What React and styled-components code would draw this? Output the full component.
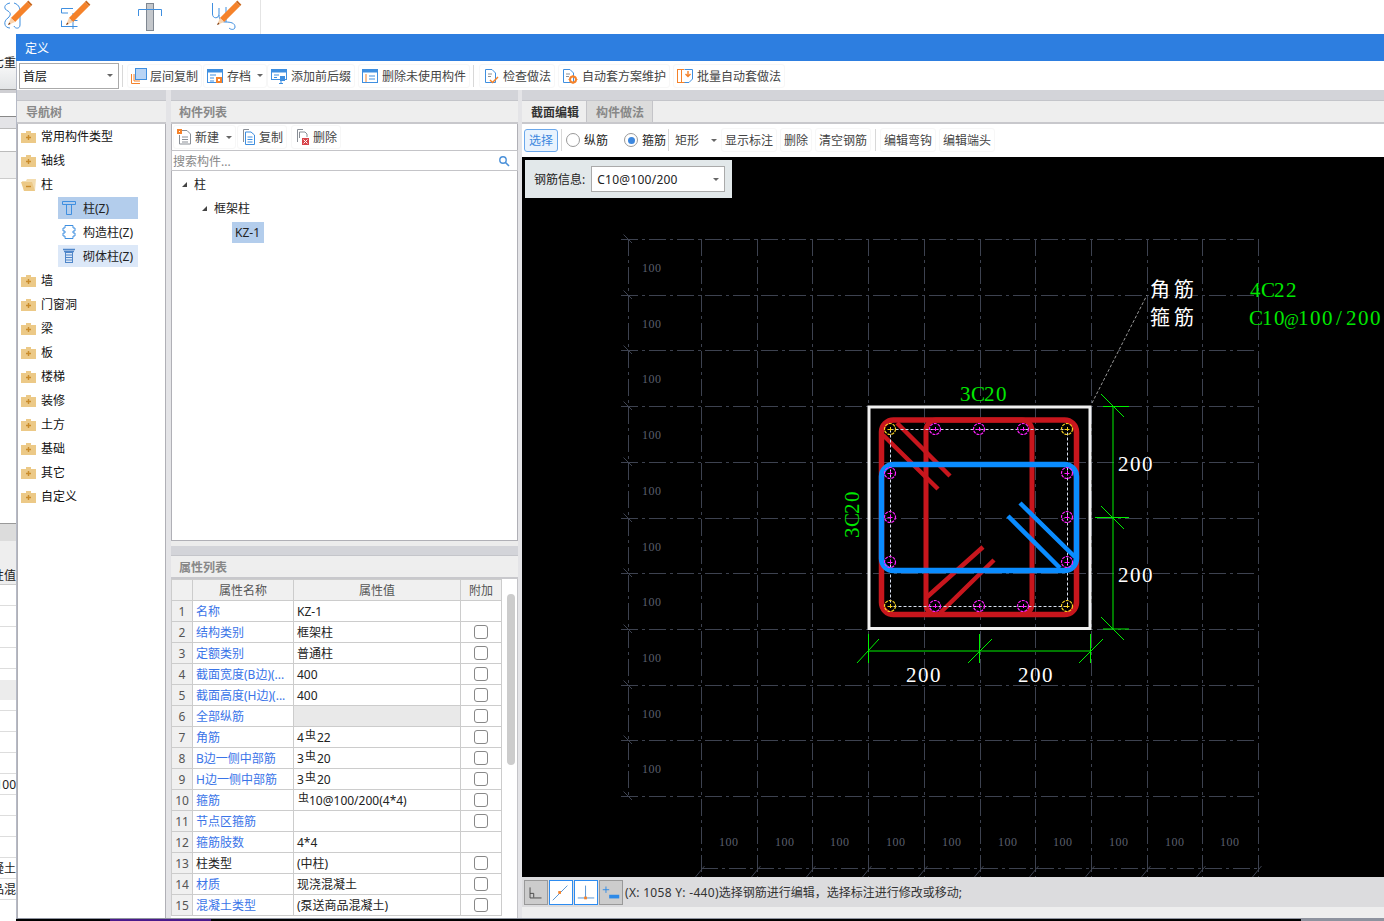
import styled, { createGlobalStyle } from 'styled-components';

const GlobalStyle = createGlobalStyle`
    html, body {
        margin: 0;
        padding: 0;
        background: #000;
        overflow: hidden;
    }
    * {
        box-sizing: border-box;
    }
`

const blue = '#3f8fe0';
const orange = '#f5822a';

const Svg = ({ size = 16, h, children }) => (
    <svg width={size} height={h || size} viewBox={`0 0 ${size} ${h || size}`} fill="none">{children}</svg>
);

const Pencil = ({ x = 0, y = 0 }) => (
    <g transform={`translate(${x} ${y})`}>
        <path d="M24.9 1.9 L29.1 6.1 L13.1 22.1 L8.9 17.9 Z" fill={orange} />
        <path d="M8.9 17.9 L13.1 22.1 L6 25 Z" fill="#f9d3ae" />
        <path d="M7.2 22.6 L8.6 24 L6 25 Z" fill="#7a3a12" />
        <path d="M24.9 1.9 L26.3 0.6 L30.4 4.7 L29.1 6.1 Z" fill="#c9661c" />
    </g>
);

const HookIcon = () => (
    <Svg size={32}>
        <path d="M8 3 C2 4 1 9 6 11 C9 13 9 15 6 18 C1 21 2 28 8 28" stroke={blue} />
        <path d="M12 3 C18 5 18 9 18 14 V25 C18 29 13 29 12 26" stroke={blue} />
        <Pencil />
    </Svg>
);

const StirrupIcon = () => (
    <Svg size={32}>
        <path d="M13 8.5 H1.5 V13 H8 M8 20.5 H17.5 M1 26.5 H17.5 M1.5 20.5 V26.5 H1 M13 13 V29" stroke={blue} />
        <Pencil />
    </Svg>
);

const ColumnIcon = () => (
    <Svg size={30}>
        <rect x="8.5" y="2.5" width="7" height="27" fill="#c4c7cb" stroke="#7f8791" />
        <path d="M0.5 15 V8.5 H23.5 V15" stroke={blue} />
    </Svg>
);

const TieIcon = () => (
    <Svg size={32}>
        <path d="M0.5 3 V14 C0.5 19 7 19 7 14 V8 M7 15 C7 19 9 22 13 22 C19 22 23 23 23 27 C23 30 19 30 17 28 M14 7 V22" stroke={blue} />
        <Pencil x={-1} />
    </Svg>
);

const LayerCopyIcon = () => (
    <Svg>
        <path d="M0.5 6 V15.5 H9 M3 6 V13 H9" stroke={orange} />
        <rect x="4.5" y="0.5" width="11" height="11" fill="#b8d4f5" stroke={blue} />
    </Svg>
);

const ArchiveIcon = () => (
    <Svg>
        <rect x="0.5" y="1.5" width="15" height="13" stroke={blue} />
        <rect x="0.5" y="1.5" width="15" height="3" fill={blue} />
        <path d="M3 7 H9 M3 10 H7 M3 13 H7" stroke={blue} />
        <rect x="9" y="9" width="6" height="6" fill={orange} />
        <rect x="11" y="11" width="2" height="2" fill="#fff" />
    </Svg>
);

const AffixIcon = () => (
    <Svg>
        <rect x="0.5" y="1.5" width="15" height="10" stroke={blue} />
        <rect x="0.5" y="1.5" width="15" height="3" fill={blue} />
        <path d="M3 7 H8 M3 9.5 H6" stroke={blue} />
        <rect x="9" y="8" width="5" height="5" fill={blue} />
        <path d="M8 15.5 H12 M10 13 V15.5" stroke={blue} />
    </Svg>
);

const PurgeIcon = () => (
    <Svg>
        <rect x="0.5" y="1.5" width="15" height="13" stroke={blue} />
        <rect x="0.5" y="1.5" width="15" height="3" fill={blue} />
        <path d="M3 7 H5 M3 9 H5 M3 11 H5 M3 13 H5" stroke={orange} />
        <path d="M7 8 H13 M7 11 H13" stroke={blue} />
    </Svg>
);

const CheckIcon = () => (
    <Svg>
        <path d="M2.5 1.5 H9 L12.5 5 V14.5 H2.5 Z" stroke={blue} />
        <path d="M5 6 H9 M5 8.5 H8" stroke="#8a8f96" />
        <path d="M7 12 L9.5 14.5 L15 9" stroke={orange} strokeWidth="1.5" />
    </Svg>
);

const SchemeIcon = () => (
    <Svg>
        <path d="M1.5 1.5 H8 L11.5 5 V14.5 H1.5 Z" stroke={blue} />
        <path d="M4 6 H8 M4 8.5 H7" stroke="#8a8f96" />
        <circle cx="11" cy="11.5" r="3" stroke={orange} strokeWidth="2" />
        <path d="M11 7 V8 M11 15 V16 M6.5 11.5 H7.5 M14.5 11.5 H15.5" stroke={orange} />
    </Svg>
);

const BatchIcon = () => (
    <Svg>
        <rect x="0.5" y="1.5" width="4" height="13" stroke={orange} />
        <path d="M7 1.5 H4.5 V14.5 H11" stroke={orange} />
        <path d="M7.5 1.5 H15.5 V11 L12 14.5 H7.5" stroke={blue} />
        <path d="M11 3 V8 M8.5 6 L11 8.5 L13.5 6" stroke={orange} strokeWidth="1.4" />
    </Svg>
);

const NewIcon = () => (
    <Svg>
        <path d="M4.5 1.5 H10 L13.5 5 V15 H2.5 V6" stroke="#8a8f96" />
        <path d="M5 8 H11 M5 10.5 H11 M5 13 H11" stroke="#8a8f96" />
        <rect x="0" y="0" width="5" height="5" fill={orange} />
        <rect x="2" y="2" width="1" height="1" fill="#fff" />
    </Svg>
);

const CopyIcon = () => (
    <Svg>
        <path d="M2.5 13 V0.5 H8" stroke="#8a8f96" />
        <path d="M4.5 3 H10 L13.5 6 V15.5 H4.5 Z" stroke={blue} />
        <path d="M6.5 8 H11.5 M6.5 10.5 H11.5 M6.5 13 H11.5" stroke={blue} />
    </Svg>
);

const DeleteIcon = () => (
    <Svg>
        <path d="M2.5 13 V0.5 H8" stroke="#8a8f96" />
        <path d="M4.5 9 V3 H10 L12 5 V8" stroke="#8a8f96" />
        <rect x="7" y="9" width="7" height="7" fill="#d9444a" />
        <path d="M8.5 10.5 L12.5 14.5 M12.5 10.5 L8.5 14.5" stroke="#fff" />
    </Svg>
);

const SearchIcon = () => (
    <Svg size={12}>
        <circle cx="5" cy="5" r="3.2" stroke="#4a90d9" strokeWidth="1.4" />
        <path d="M7.5 7.5 L11 11" stroke="#4a90d9" strokeWidth="1.6" />
    </Svg>
);

const ClosedFolder = () => (
    <Svg size={15} h={13}>
        <path d="M0 3 H5 V1 H10 V3 H15 V13 H0 Z" fill="#ecc987" />
        <path d="M5 7.5 H10 M7.5 5 V10" stroke="#c98b2a" strokeWidth="1.4" />
    </Svg>
);

const OpenFolder = () => (
    <Svg size={15} h={13}>
        <path d="M1 3 H5 L6 1 H15 L14 13 H3 Z" fill="#f3dcae" />
        <path d="M0 4 H11 L14 13 H3 Z" fill="#ecc987" />
        <path d="M5 8.5 H10" stroke="#c98b2a" strokeWidth="1.4" />
    </Svg>
);

const ColZIcon = () => (
    <Svg size={14} h={16}>
        <path d="M0.5 1.5 H13.5 V4.5 H0.5 Z M4.5 4.5 V14.5 H9.5 V4.5" stroke={blue} />
    </Svg>
);

const ConstructColIcon = () => (
    <Svg size={14} h={16}>
        <path d="M3 1.5 H11 V4 H13 V7 H11 V9 H13 V12 H11 V14.5 H3 V12 H1 V9 H3 V7 H1 V4 H3 Z" stroke={blue} strokeLinejoin="round" />
    </Svg>
);

const MasonryColIcon = () => (
    <Svg size={14} h={16}>
        <path d="M1 1.5 H13 M2 3.5 H12" stroke="#4f86c9" strokeWidth="1.4" />
        <rect x="3.5" y="4.5" width="7" height="10" stroke="#4f86c9" />
        <path d="M4 7 H10 M4 9.5 H10 M4 12 H10" stroke="#4f86c9" />
    </Svg>
);

const CornerIcon = () => (
    <Svg size={24} h={24}>
        <path d="M5.5 7 V18.5 H18" stroke="#444" />
        <path d="M5.5 13.5 H9.5 V18" stroke="#444" />
    </Svg>
);

const SlashIcon = () => (
    <Svg size={24} h={24}>
        <path d="M3 21 L19 5" stroke="#4f8fd0" />
        <rect x="9" y="11" width="3" height="3" fill={orange} />
    </Svg>
);

const PerpIcon = () => (
    <Svg size={24} h={24}>
        <path d="M3 18.5 H21 M11.5 5 V18.5" stroke="#4f8fd0" />
        <rect x="10" y="17" width="3" height="3" fill={orange} />
    </Svg>
);

const MarkIcon = () => (
    <Svg size={24} h={24}>
        <path d="M3 9.5 H10 M6.5 6 V13" stroke="#2d8ae8" />
        <rect x="10" y="15" width="11" height="4" fill="#2d8ae8" />
    </Svg>
);

const Page = styled.div`
    display: flex;
    flex-direction: column;
    width: 1384px;
    height: 921px;
    overflow: hidden;
    font-family: "Noto Sans", "Noto Sans CJK SC", sans-serif;
    font-size: 12px;
    color: #333;
`
const RibbonBar = styled.div`
    display: grid;
    grid-template-columns: 58px 78px 74px 49px 1fr;
    flex: 0 0 34px;
    padding-left: 2px;
    background: #fff;
    overflow: hidden;
`
const RibbonIcon = styled.div`
    padding-top: ${props => props.$top || 0}px;
    border-right: ${props => props.$last ? '1px solid #e4e4e4' : 'none'};
`
const Body = styled.div`
    display: flex;
    flex: 1;
    min-height: 0;
`
const Sliver = styled.div`
    display: flex;
    flex-direction: column;
    flex: 0 0 16px;
    background: #fff;
    overflow: hidden;
`
const SliverRow = styled.div`
    display: flex;
    align-items: ${props => props.$align || 'center'};
    justify-content: flex-end;
    flex: 0 0 ${props => props.$h}px;
    background: ${props => props.$bg || '#fff'};
    border-bottom: ${props => props.$line ? `1px solid ${props.$line}` : 'none'};
    color: #222;
    white-space: nowrap;
    font-size: 12px;
`
const WindowColumn = styled.div`
    display: flex;
    flex-direction: column;
    flex: 1;
    min-width: 0;
`
const Window = styled.div`
    display: flex;
    flex-direction: column;
    flex: 1;
    min-height: 0;
    border-left: 1px solid #b6bac6;
    border-bottom: 1px solid #8e939f;
    background: #e4e4e7;
`
const TaskEdge = styled.div`
    display: flex;
    flex: 0 0 2px;
    background: #000;
`
const TaskPiece = styled.div`
    flex: 0 0 ${props => props.$w}px;
    background: ${props => props.$bg};
`
const TitleBar = styled.div`
    display: flex;
    align-items: center;
    flex: 0 0 27px;
    margin-left: -1px;
    padding-left: 9px;
    background: #2d7ee0;
    color: #fff;
`
const MainToolbar = styled.div`
    display: flex;
    align-items: center;
    flex: 0 0 29px;
    padding-left: 2px;
    background: #fff;
`
const FloorSelect = styled.div`
    display: flex;
    align-items: center;
    justify-content: space-between;
    width: 100px;
    height: 26px;
    padding: 0 5px 0 3px;
    border: 1px solid #aaa;
    color: #111;
`
const Arrow = styled.span`
    flex: none;
    width: 0;
    height: 0;
    margin-left: ${props => props.$ml || 0}px;
    border-left: 3px solid transparent;
    border-right: 3px solid transparent;
    border-top: 3px solid #666;
`
const Sep = styled.div`
    flex: none;
    width: 1px;
    height: 22px;
    margin: 0 ${props => props.$mr ?? 4}px 0 ${props => props.$ml ?? 3}px;
    background: #d8d8d8;
`
const ToolButton = styled.div`
    display: flex;
    align-items: center;
    gap: ${props => props.$gap ?? 4}px;
    height: 24px;
    margin-right: ${props => props.$mr ?? 1}px;
    padding: 0 3px;
    border: 1px solid #f7f7f7;
    border-radius: 3px;
    color: #444;
    white-space: nowrap;
`
const Workspace = styled.div`
    display: flex;
    flex: 1;
    min-height: 0;
`
const Column = styled.div`
    display: flex;
    flex-direction: column;
    flex: 0 0 ${props => props.$w ? `${props.$w}px` : 'auto'};
    flex-grow: ${props => props.$w ? 0 : 1};
    min-width: 0;
    margin-left: ${props => props.$ml || 0}px;
    background: #fff;
`
const Strip = styled.div`
    flex: 0 0 ${props => props.$h || 11}px;
    background: #d3d4d9;
    border-top: ${props => props.$top ? `${props.$top}px solid #ececec` : 'none'};
    border-bottom: 1px solid #c4c5ca;
`
const PanelHeader = styled.div`
    display: flex;
    align-items: center;
    flex: 0 0 ${props => props.$h || 23}px;
    padding-left: ${props => props.$pl || 9}px;
    background: #eee;
    border-bottom: 2px solid #c8c8cc;
    color: #888;
    font-weight: 700;
`
const NavList = styled.div`
    display: flex;
    flex-direction: column;
    flex: 1;
    border-left: 1px solid #b0b0b6;
    border-right: 1px solid #b0b0b6;
`
const NavRow = styled.div`
    display: flex;
    align-items: center;
    gap: 5px;
    flex: 0 0 24px;
    padding-left: 3px;
    color: #111;
`
const NavChild = styled.div`
    display: flex;
    align-items: center;
    gap: 7px;
    flex: 0 0 22px;
    width: 80px;
    margin: 1px 0 1px 40px;
    padding-left: 4px;
    background: ${props => props.$tone === 'on' ? '#b3cdec' : props.$tone === 'soft' ? '#dce8f8' : 'transparent'};
    color: #222;
`
const CompToolbar = styled.div`
    display: flex;
    align-items: center;
    flex: 0 0 26px;
    padding-left: 1px;
    border-left: 1px solid #b0b0b6;
    border-right: 1px solid #b0b0b6;
`
const SearchBox = styled.div`
    display: flex;
    align-items: center;
    justify-content: space-between;
    flex: 0 0 21px;
    padding: 0 7px 0 1px;
    border: 1px solid #c4c4c8;
    color: #888;
`
const TreeArea = styled.div`
    flex: 1;
    padding-top: 1px;
    border-left: 1px solid #b0b0b6;
    border-right: 1px solid #b0b0b6;
    border-bottom: 1px solid #b0b0b6;
`
const TreeRow = styled.div`
    display: flex;
    align-items: center;
    gap: 7px;
    height: 24px;
    padding-left: ${props => props.$indent}px;
    color: #222;
`
const TreeCaret = styled.span`
    width: 0;
    height: 0;
    border-bottom: 5px solid #444;
    border-left: 5px solid transparent;
`
const TreeSelected = styled.span`
    display: flex;
    align-items: center;
    height: 21px;
    padding: 0 4px 0 3px;
    background: #b3cdec;
`
const PropsWrap = styled.div`
    display: flex;
    flex: 0 0 339px;
    overflow: hidden;
    border-right: 1px solid #c4c4c8;
`
const PropTable = styled.table`
    flex: none;
    width: 330px;
    height: fit-content;
    border-collapse: collapse;
    table-layout: fixed;
`
const Th = styled.th`
    height: 21px;
    padding: 0;
    background: #f0f0f0;
    border: 1px solid #ccc;
    color: #555;
    font-weight: 400;
    font-size: 12px;
`
const NumCell = styled.td`
    height: 21px;
    padding: 0;
    background: #f0f0f0;
    border: 1px solid #ccc;
    color: #555;
    text-align: center;
`
const NameCell = styled.td`
    padding: 0 3px;
    border: 1px solid #ccc;
    color: ${props => props.$plain ? '#222' : '#3a74e8'};
    white-space: nowrap;
    overflow: hidden;
`
const ValueCell = styled.td`
    padding: 0 3px;
    background: ${props => props.$grey ? '#e9e9e9' : '#fff'};
    border: 1px solid #ccc;
    color: #222;
    white-space: nowrap;
`
const CheckCell = styled.td`
    padding: 0;
    border: 1px solid #ccc;
`
const CheckBox = styled.span`
    display: block;
    width: 14px;
    height: 14px;
    margin: 0 auto;
    border: 1px solid #888;
    border-radius: 3px;
`
const RebarSign = styled.span`
    margin: 0 ${props => props.$mr ?? 1}px 0 1px;
    font-size: 11px;
    line-height: 0;
    vertical-align: 3px;
`
const ScrollTrack = styled.div`
    flex: 1;
    padding: 15px 0 0 5px;
`
const ScrollThumb = styled.div`
    width: 8px;
    height: 171px;
    background: #ccc;
    border-radius: 4px;
`
const TabRow = styled.div`
    display: flex;
    flex: 0 0 23px;
    background: #eee;
    border-bottom: 2px solid #c8c8cc;
`
const Tab = styled.div`
    display: flex;
    align-items: center;
    padding: 0 ${props => props.$active ? 7 : 8}px 0 9px;
    background: ${props => props.$active ? '#eee' : '#dcdcdc'};
    border-right: 1px solid #c4c4c8;
    color: ${props => props.$active ? '#333' : '#888'};
    font-weight: 700;
`
const EditToolbar = styled.div`
    display: flex;
    align-items: center;
    flex: 0 0 33px;
    padding: 0 0 1px 2px;
    background: #fff;
`
const SelectButton = styled.div`
    display: flex;
    align-items: center;
    justify-content: center;
    flex: none;
    width: 34px;
    height: 23px;
    background: #e9f3fd;
    border: 1px solid #6aa8ec;
    border-radius: 3px;
    color: #3c87de;
`
const RadioLabel = styled.label`
    display: flex;
    align-items: center;
    gap: 4px;
    flex: none;
    margin-right: ${props => props.$mr}px;
    color: #222;
`
const RadioDot = styled.span`
    display: flex;
    align-items: center;
    justify-content: center;
    width: 14px;
    height: 14px;
    background: #fff;
    border: 1px solid #999;
    border-radius: 50%;
    &::after {
        content: '';
        width: 7px;
        height: 7px;
        border-radius: 50%;
        background: ${props => props.$on ? '#3c87de' : 'transparent'};
    }
`
const ShapeSelect = styled.div`
    display: flex;
    align-items: center;
    flex: none;
    width: 47px;
    height: 22px;
    margin-right: 2px;
    padding-left: 3px;
    color: #444;
    white-space: nowrap;
`
const Canvas = styled.div`
    position: relative;
    flex: 0 0 720px;
    background: #000;
    overflow: hidden;
`
const InfoPanel = styled.div`
    position: absolute;
    left: 3px;
    top: 3px;
    display: flex;
    align-items: center;
    gap: 6px;
    width: 207px;
    height: 38px;
    padding-left: 9px;
    background: #e2e8ea;
    color: #222;
`
const InfoSelect = styled.div`
    display: flex;
    align-items: center;
    justify-content: space-between;
    width: 134px;
    height: 26px;
    padding: 0 5px;
    background: #fff;
    border: 1px solid #aaa;
    letter-spacing: 0.25px;
`
const StatusBar = styled.div`
    display: flex;
    align-items: center;
    gap: 1px;
    flex: 0 0 30px;
    padding-left: 2px;
    background: #dcdcde;
    color: #333;
`
const SnapButton = styled.div`
    display: flex;
    align-items: center;
    justify-content: center;
    flex: none;
    width: 24px;
    height: 25px;
    background: ${props => props.$on ? '#fff' : '#ccc'};
    border: ${props => props.$on ? '1px solid #2d8cf0' : '1px solid #999'};
`
const StatusText = styled.span`
    margin-left: 1px;
    white-space: nowrap;
`
const Coords = styled.span`
    letter-spacing: 0.3px;
`
const StatusFoot = styled.div`
    flex: 1;
    background: #eee;
`
const CadText = styled.text`
    font-family: "Liberation Serif", serif;
    font-size: ${props => props.$size || 21}px;
    fill: ${props => props.$fill || '#00e800'};
`
const CjkText = styled.text`
    font-family: "Noto Sans CJK SC", sans-serif;
    font-size: 20px;
    letter-spacing: 4px;
    fill: #fff;
`

const sliverRows = [
    { h: 56, text: '七重', bg: 'linear-gradient(#fff 40%, #e2e4e6)', line: '#9a9a9a' },
    { h: 3, bg: '#cfcfd3' },
    { h: 24, line: '#888' },
    { h: 12, bg: '#e4e4e7', line: '#bbb' },
    { h: 23, line: '#bbb' },
    { h: 27, bg: '#f0f0f0', line: '#ccc' },
    { h: 345, line: '#999' },
    { h: 17, bg: '#dcdcdc' },
    { h: 44, bg: '#eee', text: '性值', line: '#ccc', align: 'flex-end' },
    { h: 21, line: '#ddd' },
    { h: 21, line: '#ddd' },
    { h: 21, line: '#ddd' },
    { h: 21, line: '#ddd' },
    { h: 11 },
    { h: 20, bg: '#ececec' },
    { h: 11, line: '#ddd' },
    { h: 21, line: '#ddd' },
    { h: 21, line: '#ddd' },
    { h: 21, line: '#ddd' },
    { h: 21, line: '#ddd', text: '100' },
    { h: 21, line: '#ddd' },
    { h: 21, line: '#ddd' },
    { h: 21, line: '#ddd' },
    { h: 21, line: '#ddd', text: '疑土' },
    { h: 21, line: '#ddd', text: '品混' },
    { h: 21 },
];

const mainTools = [
    { icon: <LayerCopyIcon />, label: '层间复制', gap: 3, mr: 1 },
    { icon: <ArchiveIcon />, label: '存档', arrow: true, gap: 4, mr: 0 },
    { icon: <AffixIcon />, label: '添加前后缀', gap: 4, mr: 3 },
    { icon: <PurgeIcon />, label: '删除未使用构件', gap: 4, mr: 0 },
];

const checkTools = [
    { icon: <CheckIcon />, label: '检查做法', gap: 4, mr: 3 },
    { icon: <SchemeIcon />, label: '自动套方案维护', gap: 4, mr: 3 },
    { icon: <BatchIcon />, label: '批量自动套做法', gap: 4, mr: 0 },
];

const navTop = ['常用构件类型', '轴线'];
const navBottom = ['墙', '门窗洞', '梁', '板', '楼梯', '装修', '土方', '基础', '其它', '自定义'];

const columnKinds = [
    { icon: <ColZIcon />, label: '柱(Z)', tone: 'on' },
    { icon: <ConstructColIcon />, label: '构造柱(Z)' },
    { icon: <MasonryColIcon />, label: '砌体柱(Z)', tone: 'soft' },
];

const props15 = [
    { name: '名称', value: 'KZ-1', noCheck: true },
    { name: '结构类别', value: '框架柱' },
    { name: '定额类别', value: '普通柱' },
    { name: '截面宽度(B边)(...', value: '400' },
    { name: '截面高度(H边)(...', value: '400' },
    { name: '全部纵筋', value: '', grey: true },
    { name: '角筋', value: <>4<RebarSign>虫</RebarSign>22</> },
    { name: 'B边一侧中部筋', value: <>3<RebarSign>虫</RebarSign>20</> },
    { name: 'H边一侧中部筋', value: <>3<RebarSign>虫</RebarSign>20</> },
    { name: '箍筋', value: <><RebarSign $mr={0}>虫</RebarSign>10@100/200(4*4)</> },
    { name: '节点区箍筋', value: '' },
    { name: '箍筋肢数', value: '4*4', noCheck: true },
    { name: '柱类型', value: '(中柱)', plain: true },
    { name: '材质', value: '现浇混凝土' },
    { name: '混凝土类型', value: '(泵送商品混凝土)' },
];

const GRID = '#3d4250';
const GREEN = '#00f000';
const DASH = '17 4 3 4';
const gridY = Array.from({ length: 11 }, (_, i) => Math.round(239 + i * 55.7) + 0.5);
const gridX = Array.from({ length: 11 }, (_, i) => Math.round(701 + i * 55.7) + 0.5);
const midBars = [[935, 429], [979, 429], [1023, 429], [890, 473], [1067, 473], [890, 517], [1067, 517], [890, 562], [1067, 562], [935, 606], [979, 606], [1023, 606]];
const cornerBars = [[890, 429], [1067, 429], [890, 606], [1067, 606]];

const Bar = ({ x, y, color, r = 5.5 }) => (
    <g>
        <circle cx={x} cy={y} r={r} stroke={color} strokeWidth="1.2" strokeDasharray="3 1" />
        <path d={`M${x - 2.5} ${y + 0.5} H${x + 2.5}`} stroke={color} />
        <path d={`M${x + 0.5} ${y - 2} V${y + 2}`} stroke={color} />
    </g>
);

// CAD text sits on a fixed 12px cell per character
const cellOffset = { C: 0, '@': -1, '/': 3 };
const MonoText = ({ x, y, fill, transform, children }) => (
    <CadText y={y} $fill={fill} transform={transform}>
        {[...children].map((ch, i) => (
            <tspan key={i} x={x + i * 12 + (cellOffset[ch] ?? 1)} fontSize={ch === '@' ? 16 : undefined}>{ch}</tspan>
        ))}
    </CadText>
);

const Section = () => (
    <svg width="862" height="720" viewBox="522 157 862 720" fill="none">
        {gridY.map(y => <path key={y} d={`M621 ${y} H1258`} stroke={GRID} strokeDasharray={DASH} />)}
        {gridY.map(y => <path key={y} d={`M623.5 ${y - 5} L632 ${y + 3.5}`} stroke={GRID} />)}
        <path d="M701 868.5 H1258" stroke={GRID} strokeDasharray={DASH} />
        <path d="M628.5 239 V796" stroke={GRID} strokeDasharray={DASH} />
        {gridX.map(x => <path key={x} d={`M${x} 239 V877`} stroke={GRID} strokeDasharray={DASH} />)}
        {gridX.map(x => <path key={x} d={`M${x - 6} 877 L${x + 3} 866`} stroke={GRID} />)}
        {gridY.slice(0, 10).map(y => <CadText key={y} x="642" y={y + 32} $size={12} $fill="#5a5f6c" textLength="19">100</CadText>)}
        {gridX.slice(0, 10).map(x => <CadText key={x} x={x + 17.5} y="846" $size={12} $fill="#5a5f6c" textLength="19">100</CadText>)}

        <rect x="869" y="407" width="221" height="221.5" stroke="#f0f0f0" strokeWidth="3" />
        <rect x="881.5" y="420" width="195" height="194.5" rx="12" stroke="#c8161d" strokeWidth="5.5" />
        <rect x="926" y="420" width="106" height="194.5" rx="10" stroke="#c8161d" strokeWidth="5" />
        <path d="M897 423 L950 476 M883 435 L938 489 M927 597 L983 547 M940 613 L994 560" stroke="#c8161d" strokeWidth="4.5" />
        <rect x="890.5" y="429.5" width="177" height="177" stroke="#d8e0f0" strokeDasharray="3 2" />
        <rect x="881.5" y="464.5" width="195" height="106" rx="12" stroke="#0a8cff" strokeWidth="5.5" />
        <path d="M1020 503 L1075 557 M1008 516 L1060 568" stroke="#0a8cff" strokeWidth="4.5" />
        {midBars.map(([x, y]) => <Bar key={`${x}-${y}`} x={x} y={y} color="#ff20ff" />)}
        {cornerBars.map(([x, y]) => <Bar key={`${x}-${y}`} x={x} y={y} color="#f5d020" />)}

        <path d="M1113 407 V629 M1103 406.5 H1129 M1095 517.5 H1129 M1103 629 H1129" stroke={GREEN} />
        <path d="M1101 394 L1124 417 M1101 506 L1124 529 M1101 617 L1124 640" stroke={GREEN} />
        <path d="M868 651 H1091 M868.5 634 V663 M979.5 634 V663 M1090.5 634 V663" stroke={GREEN} />
        <path d="M857 663 L879 639 M968 663 L992 639 M1079 663 L1103 639" stroke={GREEN} />
        <path d="M1092 403 L1147 295" stroke="#9a9a9a" strokeDasharray="3 2" />

        <MonoText x={959} y={401}>3C20</MonoText>
        <MonoText x={835} y={515} transform="rotate(-90 859 515)">3C20</MonoText>
        <MonoText x={905} y={682} fill="#fff">200</MonoText>
        <MonoText x={1017} y={682} fill="#fff">200</MonoText>
        <MonoText x={1117} y={471} fill="#fff">200</MonoText>
        <MonoText x={1117} y={582} fill="#fff">200</MonoText>
        <CjkText x="1150" y="297">角筋</CjkText>
        <CjkText x="1150" y="325">箍筋</CjkText>
        <MonoText x={1249} y={297}>4C22</MonoText>
        <MonoText x={1249} y={325}>C10@100/200</MonoText>
    </svg>
);

export default function App() {
    return (
        <Page>
            <GlobalStyle />
            <RibbonBar>
                <RibbonIcon><HookIcon /></RibbonIcon>
                <RibbonIcon><StirrupIcon /></RibbonIcon>
                <RibbonIcon $top={1}><ColumnIcon /></RibbonIcon>
                <RibbonIcon $last><TieIcon /></RibbonIcon>
            </RibbonBar>
            <Body>
                <Sliver>
                    {sliverRows.map((row, i) => (
                        <SliverRow key={i} $h={row.h} $bg={row.bg} $line={row.line} $align={row.align}>{row.text}</SliverRow>
                    ))}
                </Sliver>
                <WindowColumn>
                    <Window>
                        <TitleBar>定义</TitleBar>
                        <MainToolbar>
                            <FloorSelect>首层<Arrow /></FloorSelect>
                            <Sep />
                            {mainTools.map(tool => (
                                <ToolButton key={tool.label} $gap={tool.gap} $mr={tool.mr}>
                                    {tool.icon}
                                    {tool.label}
                                    {tool.arrow && <Arrow $ml={2} />}
                                </ToolButton>
                            ))}
                            <Sep $mr={5} />
                            {checkTools.map(tool => (
                                <ToolButton key={tool.label} $gap={tool.gap} $mr={tool.mr}>
                                    {tool.icon}
                                    {tool.label}
                                </ToolButton>
                            ))}
                        </MainToolbar>
                        <Workspace>
                            <Column $w={149}>
                                <Strip />
                                <PanelHeader>导航树</PanelHeader>
                                <NavList>
                                    {navTop.map(label => (
                                        <NavRow key={label}><ClosedFolder />{label}</NavRow>
                                    ))}
                                    <NavRow><OpenFolder />柱</NavRow>
                                    {columnKinds.map(kind => (
                                        <NavChild key={kind.label} $tone={kind.tone}>{kind.icon}{kind.label}</NavChild>
                                    ))}
                                    {navBottom.map(label => (
                                        <NavRow key={label}><ClosedFolder />{label}</NavRow>
                                    ))}
                                </NavList>
                            </Column>
                            <Column $w={347} $ml={5}>
                                <Strip />
                                <PanelHeader $pl={8}>构件列表</PanelHeader>
                                <CompToolbar>
                                    <ToolButton $gap={2} $mr={1}>
                                        <NewIcon />新建<Arrow $ml={5} />
                                    </ToolButton>
                                    <ToolButton $gap={2} $mr={4}><CopyIcon />复制</ToolButton>
                                    <ToolButton $gap={2}><DeleteIcon />删除</ToolButton>
                                </CompToolbar>
                                <SearchBox>搜索构件...<SearchIcon /></SearchBox>
                                <TreeArea>
                                    <TreeRow $indent={10}><TreeCaret />柱</TreeRow>
                                    <TreeRow $indent={30}><TreeCaret />框架柱</TreeRow>
                                    <TreeRow $indent={60}><TreeSelected>KZ-1</TreeSelected></TreeRow>
                                </TreeArea>
                                <Strip $h={15} $top={5} />
                                <PanelHeader $pl={8}>属性列表</PanelHeader>
                                <PropsWrap>
                                    <PropTable>
                                        <colgroup>
                                            <col width="21" />
                                            <col width="101" />
                                            <col width="167" />
                                            <col width="41" />
                                        </colgroup>
                                        <thead>
                                            <tr>
                                                <Th />
                                                <Th>属性名称</Th>
                                                <Th>属性值</Th>
                                                <Th>附加</Th>
                                            </tr>
                                        </thead>
                                        <tbody>
                                            {props15.map((row, i) => (
                                                <tr key={row.name}>
                                                    <NumCell>{i + 1}</NumCell>
                                                    <NameCell $plain={row.plain}>{row.name}</NameCell>
                                                    <ValueCell $grey={row.grey}>{row.value}</ValueCell>
                                                    <CheckCell>{!row.noCheck && <CheckBox />}</CheckCell>
                                                </tr>
                                            ))}
                                        </tbody>
                                    </PropTable>
                                    <ScrollTrack><ScrollThumb /></ScrollTrack>
                                </PropsWrap>
                            </Column>
                            <Column $ml={4}>
                                <Strip />
                                <TabRow>
                                    <Tab $active>截面编辑</Tab>
                                    <Tab>构件做法</Tab>
                                </TabRow>
                                <EditToolbar>
                                    <SelectButton>选择</SelectButton>
                                    <Sep $ml={3} $mr={4} />
                                    <RadioLabel $mr={16}><RadioDot />纵筋</RadioLabel>
                                    <RadioLabel $mr={2}><RadioDot $on />箍筋</RadioLabel>
                                    <Sep $ml={0} $mr={3} />
                                    <ShapeSelect>矩形<Arrow $ml={12} /></ShapeSelect>
                                    <ToolButton $mr={3}>显示标注</ToolButton>
                                    <ToolButton $mr={3}>删除</ToolButton>
                                    <ToolButton>清空钢筋</ToolButton>
                                    <Sep $ml={3} $mr={4} />
                                    <ToolButton $mr={3}>编辑弯钩</ToolButton>
                                    <ToolButton>编辑端头</ToolButton>
                                </EditToolbar>
                                <Canvas>
                                    <Section />
                                    <InfoPanel>
                                        钢筋信息:
                                        <InfoSelect>C10@100/200<Arrow /></InfoSelect>
                                    </InfoPanel>
                                </Canvas>
                                <StatusBar>
                                    <SnapButton><CornerIcon /></SnapButton>
                                    <SnapButton $on><SlashIcon /></SnapButton>
                                    <SnapButton $on><PerpIcon /></SnapButton>
                                    <SnapButton><MarkIcon /></SnapButton>
                                    <StatusText><Coords>(X: 1058 Y: -440)</Coords>选择钢筋进行编辑，选择标注进行修改或移动;</StatusText>
                                </StatusBar>
                                <StatusFoot />
                            </Column>
                        </Workspace>
                    </Window>
                    <TaskEdge>
                        <TaskPiece $w={94} />
                        <TaskPiece $w={101} $bg="#4a1a8c" />
                        <TaskPiece $w={1090} />
                        <TaskPiece $w={83} $bg="#8e939f" />
                    </TaskEdge>
                </WindowColumn>
            </Body>
        </Page>
    );
}
